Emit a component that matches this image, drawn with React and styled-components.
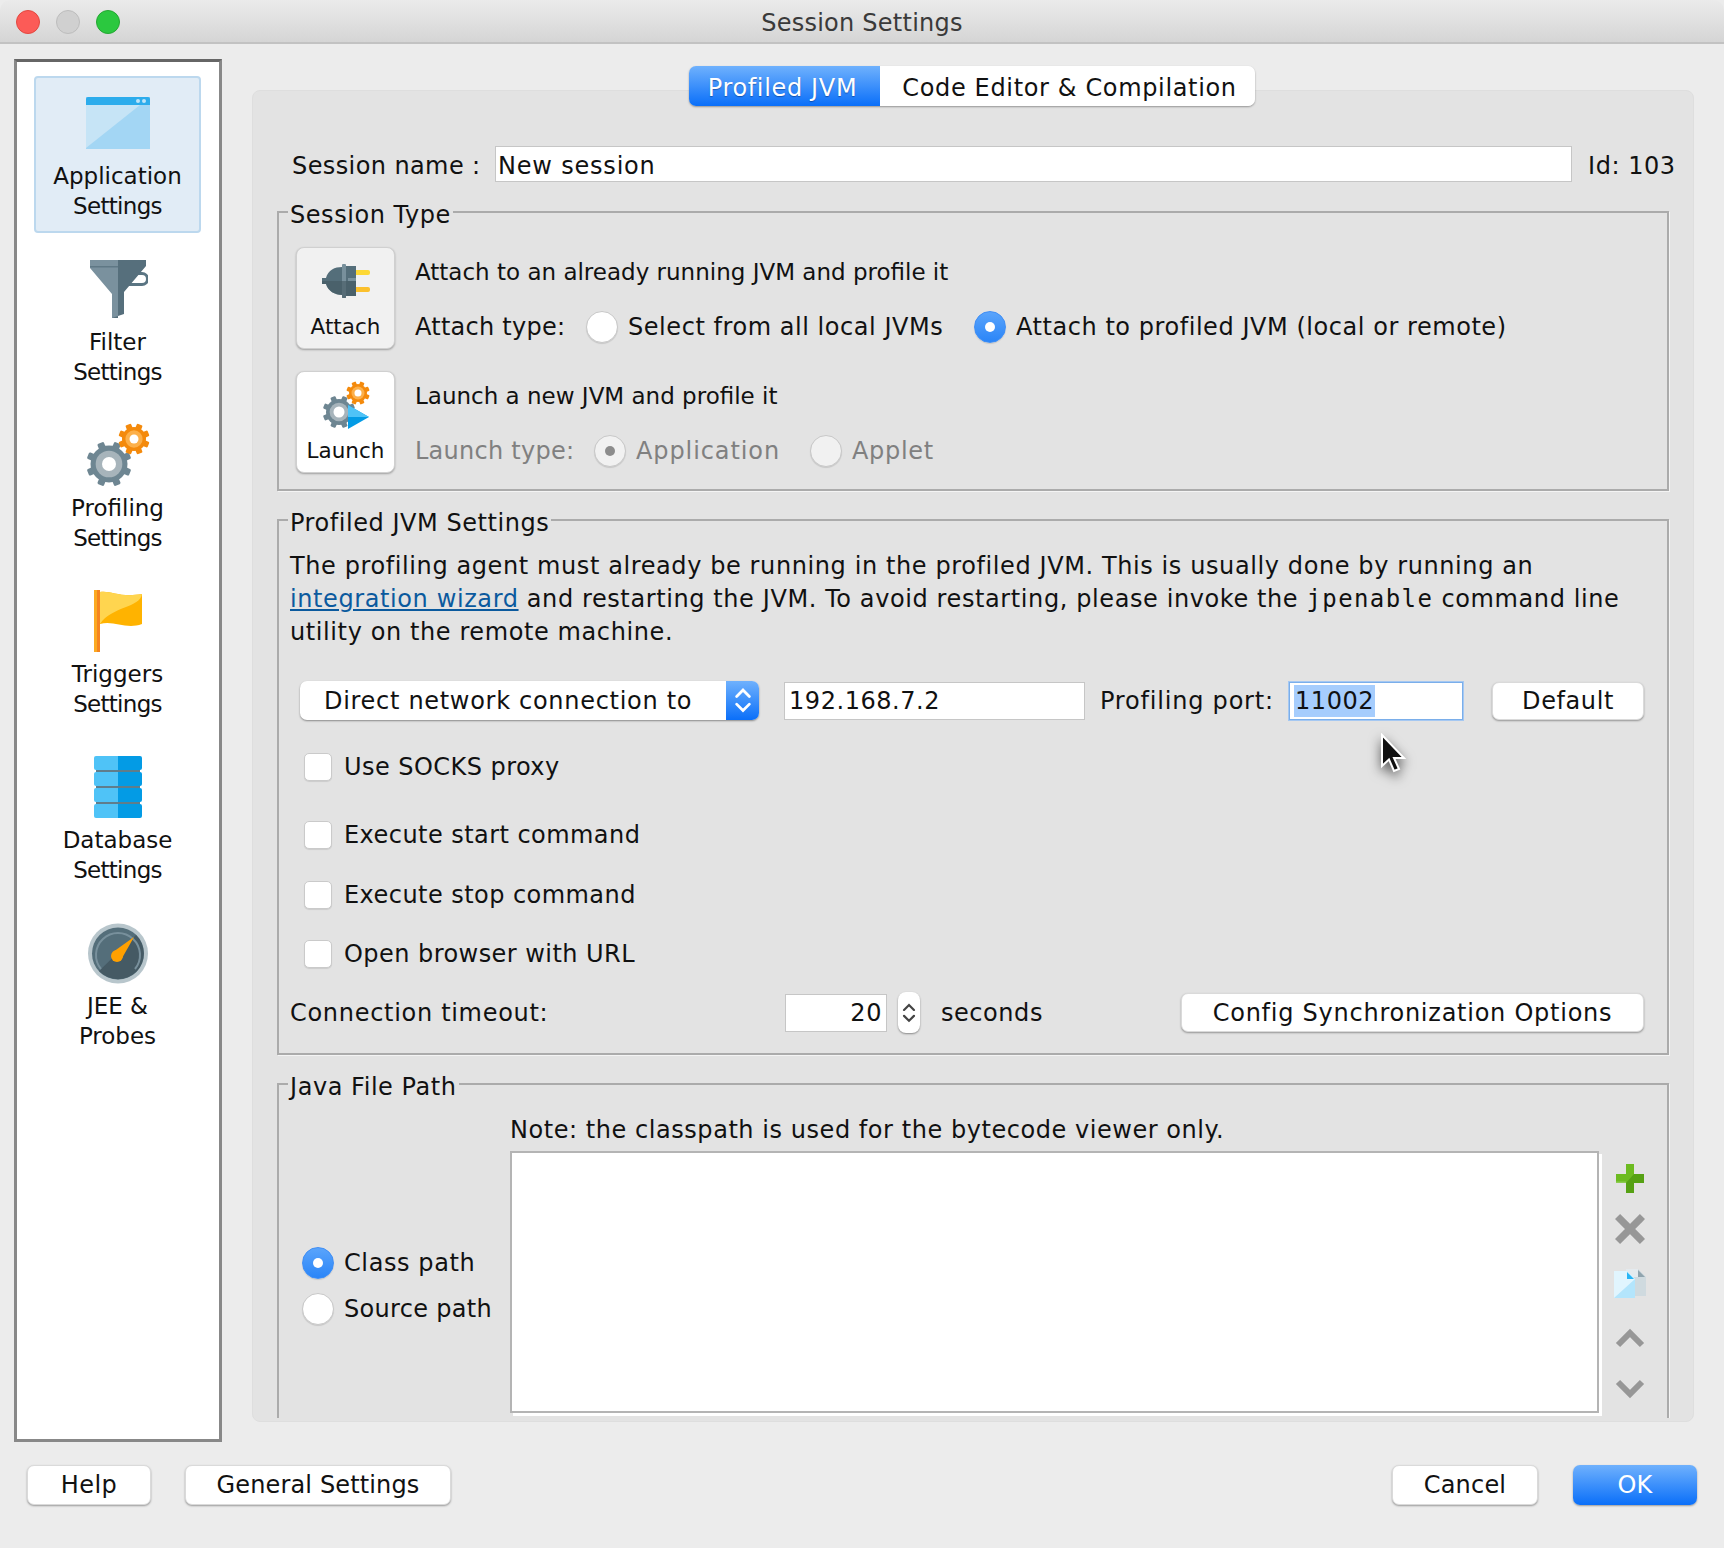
import React from 'react';
import styled, {createGlobalStyle} from 'styled-components';

const GlobalStyle = createGlobalStyle`
  html, body {
    margin: 0;
    padding: 0;
    background: #ececec;
  }
  body {
    font-family: "DejaVu Sans", sans-serif;
    font-size: 24px;
    letter-spacing: .55px;
    color: #111;
  }
`;

const Window = styled.div`
  width: 1724px;
  height: 1548px;
  display: flex;
  flex-direction: column;
  background: #ececec;
  overflow: hidden;
`;

const TitleBar = styled.div`
  height: 44px;
  flex: none;
  box-sizing: border-box;
  display: flex;
  align-items: center;
  justify-content: center;
  position: relative;
  padding-top: 4px;
  border-bottom: 2px solid #c2c2c2;
  border-radius: 10px 10px 0 0;
  background: linear-gradient(#ebebeb, #d5d5d5);
  color: #3a3a3a;
  letter-spacing: .25px;
`;

const Lights = styled.div`
  position: absolute;
  left: 16px;
  top: 10px;
  display: flex;
  gap: 16px;
`;

const Light = styled.span`
  width: 24px;
  height: 24px;
  box-sizing: border-box;
  border-radius: 50%;
  background: ${p => p.$color};
  border: 1px solid ${p => p.$edge};
`;

const Body = styled.div`
  flex: none;
  display: flex;
  gap: 30px;
  padding-left: 14px;
  height: 1378px;
`;

const Sidebar = styled.div`
  width: 208px;
  height: 1383px;
  margin-top: 15px;
  box-sizing: border-box;
  border: 3px solid #888;
  border-top-color: #666;
  background: #fff;
  padding: 14px 17px;
  display: flex;
  flex-direction: column;
  gap: 9px;
`;

const NavItem = styled.div`
  width: 167px;
  height: 157px;
  flex: none;
  box-sizing: border-box;
  border-radius: 4px;
  border: 2px solid ${p => (p.$active ? '#bcd8ee' : 'transparent')};
  background: ${p => (p.$active ? '#e1ecf6' : 'transparent')};
  display: flex;
  flex-direction: column;
  align-items: center;
  color: #111;
`;

const NavIcon = styled.div`
  height: 83px;
  flex: none;
  display: flex;
  align-items: center;
  justify-content: center;
  padding-top: 7px;
  box-sizing: border-box;
`;

const NavLabel = styled.div`
  text-align: center;
  line-height: 30px;
  font-size: 23px;
  letter-spacing: 0;
`;

const NavLine = styled.div`
  letter-spacing: ${p => (p.$tight ? '-.7px' : '0')};
`;

const Main = styled.div`
  width: 1442px;
  display: flex;
  flex-direction: column;
  align-items: center;
  padding-top: 22px;
`;

const Tabs = styled.div`
  display: flex;
  height: 40px;
  margin: 0 0 -16px -2px;
  position: relative;
  z-index: 1;
  border-radius: 7px;
  box-shadow: 0 1px 2px rgba(0, 0, 0, .35);
`;

const Tab = styled.div`
  width: ${p => p.$w}px;
  display: flex;
  align-items: center;
  justify-content: center;
  box-sizing: border-box;
  padding: ${p => (p.$active ? '3px 4px 0 0' : '3px 0 0 4px')};
  background: ${p => (p.$active ? 'linear-gradient(#6fb1fd, #0a6ff9)' : '#fff')};
  color: ${p => (p.$active ? '#fff' : '#111')};
  text-shadow: ${p => (p.$active ? '0 1px 1px rgba(0, 30, 90, .45)' : 'none')};
  letter-spacing: .65px;
  border-radius: ${p => (p.$active ? '7px 0 0 7px' : '0 7px 7px 0')};
`;

const Panel = styled.div`
  width: 1442px;
  height: 1332px;
  box-sizing: border-box;
  flex: none;
  background: #e3e3e3;
  border: 1px solid #dedede;
  border-radius: 8px;
  padding: 55px 10px 3px 24px;
  overflow: hidden;
`;

const PanelInner = styled.div`
  height: 100%;
  overflow: hidden;
  display: flex;
  flex-direction: column;
  gap: 17px;
`;

const SessionRow = styled.div`
  height: 36px;
  margin-bottom: -1px;
  display: flex;
  align-items: center;
  flex: none;
`;

const SessionLabel = styled.div`
  width: 218px;
  padding: 3px 0 0 15px;
  box-sizing: border-box;
  flex: none;
  letter-spacing: .4px;
`;

const Field = styled.div`
  width: ${p => p.$w}px;
  height: ${p => p.$h || 38}px;
  flex: none;
  box-sizing: border-box;
  margin-left: ${p => p.$left || 0}px;
  background: #fff;
  border: 1px solid ${p => (p.$focus ? '#7aaeea' : '#c6c6c6')};
  box-shadow: ${p => (p.$focus ? '0 0 0 1px #a5c8f2' : 'none')};
  display: flex;
  align-items: center;
  justify-content: ${p => (p.$right ? 'flex-end' : 'flex-start')};
  padding: ${p => p.$inset || '0 4px'};
  color: #111;
  white-space: nowrap;
  letter-spacing: ${p => p.$spacing || '.55px'};
`;

const IdText = styled.div`
  margin-left: 16px;
  padding-top: 3px;
  white-space: nowrap;
`;

const Group = styled.fieldset`
  margin: 0 0 ${p => p.$after || 0}px;
  flex: none;
  min-width: 0;
  box-sizing: border-box;
  width: 1392px;
  border: 2px solid #ababab;
  box-shadow: 1px 1px 0 #f4f4f4;
  padding: ${p => p.$pad};
  ${p => p.$open && `
    border-bottom: none;
    height: 400px;
  `}
`;

const Legend = styled.legend`
  margin-left: -2px;
  padding: 6px 2px 0;
  line-height: 22px;
  background: #e3e3e3;
`;

const ModeRow = styled.div`
  display: flex;
  gap: 20px;
  margin: 0 0 ${p => p.$gap || 0}px 6px;
`;

const ModeButton = styled.div`
  width: 99px;
  height: 102px;
  flex: none;
  box-sizing: border-box;
  border-radius: 8px;
  background: ${p => (p.$pressed ? '#f1f1f1' : '#fff')};
  border: 1px solid #d0d0d0;
  box-shadow: 0 1px 2px rgba(0, 0, 0, .3);
  display: flex;
  flex-direction: column;
  align-items: center;
  font-size: 21.500px;
  letter-spacing: 0;
`;

const ModeIcon = styled.div`
  height: 66px;
  flex: none;
  display: flex;
  align-items: center;
  justify-content: center;
`;

const ModeText = styled.div`
  height: 102px;
  display: flex;
  flex-direction: column;
`;

const ModeHeading = styled.div`
  height: 50px;
  flex: none;
  display: flex;
  align-items: center;
  font-size: 23px;
  letter-spacing: 0;
  white-space: nowrap;
`;

const ModeLine = styled.div`
  height: 50px;
  flex: none;
  display: flex;
  align-items: center;
  white-space: nowrap;
  color: ${p => (p.$muted ? '#808080' : '#111')};
  margin-top: 5px;
`;

const RowLabel = styled.div`
  width: ${p => p.$w}px;
  flex: none;
  letter-spacing: ${p => p.$spacing || '.55px'};
`;

const Option = styled.div`
  width: ${p => p.$w}px;
  flex: none;
  display: flex;
  align-items: center;
  gap: 10px;
  white-space: nowrap;
  letter-spacing: ${p => p.$spacing || '.55px'};
`;

const Radio = styled.span`
  width: 32px;
  height: 32px;
  flex: none;
  box-sizing: border-box;
  border-radius: 50%;
  display: flex;
  align-items: center;
  justify-content: center;
  border: 1px solid ${p => (p.$on ? '#3f8ef5' : '#c8c8c8')};
  background: ${p => (p.$on ? 'linear-gradient(#5aa4fb, #2a85f8)' : p.$muted ? '#f1f1f1' : '#fff')};
  box-shadow: 0 1px 1px rgba(0, 0, 0, .12);

  &::after {
    content: '';
    display: ${p => (p.$on || p.$dot ? 'block' : 'none')};
    width: 10px;
    height: 10px;
    border-radius: 50%;
    background: ${p => (p.$on ? '#fff' : '#8c8c8c')};
  }
`;

const Paragraph = styled.div`
  line-height: 33px;
  letter-spacing: .6px;
  white-space: nowrap;
`;

const Wizard = styled.span`
  color: #0b5a9e;
  text-decoration: underline;
`;

const Mono = styled.span`
  font-family: "DejaVu Sans Mono", monospace;
  letter-spacing: 1.400px;
`;

const NetRow = styled.div`
  height: 39px;
  margin: 32px 0 0 10px;
  display: flex;
  align-items: center;
`;

const Select = styled.div`
  width: 459px;
  height: 39px;
  flex: none;
  box-sizing: border-box;
  display: flex;
  align-items: center;
  justify-content: space-between;
  padding-left: 24px;
  background: #fff;
  border-radius: 7px;
  box-shadow: 0 1px 2px rgba(0, 0, 0, .4);
  overflow: hidden;
  white-space: nowrap;
  letter-spacing: .7px;
`;

const SelectArrows = styled.div`
  width: 33px;
  height: 39px;
  display: flex;
  align-items: center;
  justify-content: center;
  background: linear-gradient(#6fb1fd, #0a6ff9);
`;

const PortLabel = styled.div`
  width: 204px;
  padding-left: 15px;
  box-sizing: border-box;
  flex: none;
  white-space: nowrap;
  letter-spacing: .8px;
`;

const PortWrap = styled.div`
  position: relative;
  width: 174px;
  flex: none;
`;

const Selected = styled.span`
  background: #a6cdfd;
  line-height: 32px;
  padding: 0 1px;
`;

const Cursor = styled.svg`
  position: absolute;
  left: 90px;
  top: 51px;
  z-index: 2;
  filter: drop-shadow(0 5px 6px rgba(0, 0, 0, .6));
`;

const PushButton = styled.div`
  width: ${p => p.$w}px;
  height: ${p => p.$h || 39}px;
  flex: none;
  box-sizing: border-box;
  display: flex;
  align-items: center;
  justify-content: center;
  margin-left: ${p => p.$left || 0}px;
  border-radius: 7px;
  background: ${p => (p.$primary ? 'linear-gradient(#6fb1fd, #0a6ff9)' : '#fff')};
  color: ${p => (p.$primary ? '#fff' : '#111')};
  border: ${p => (p.$primary ? 'none' : '1px solid #dadada')};
  box-shadow: 0 1px 2px rgba(0, 0, 0, .35);
  white-space: nowrap;
  letter-spacing: ${p => p.$spacing || '.75px'};
`;

const CheckRow = styled.div`
  height: 30px;
  margin: ${p => p.$top}px 0 0 14px;
  display: flex;
  align-items: center;
  gap: 12px;
  letter-spacing: .45px;
`;

const Checkbox = styled.span`
  width: 28px;
  height: 28px;
  flex: none;
  box-sizing: border-box;
  background: #fff;
  border: 1px solid #cacaca;
  border-radius: 5px;
  box-shadow: 0 1px 1px rgba(0, 0, 0, .1);
`;

const TimeoutRow = styled.div`
  height: 39px;
  margin-top: 24px;
  display: flex;
  align-items: center;
`;

const Spinner = styled.div`
  width: 22px;
  height: 41px;
  margin-left: 11px;
  flex: none;
  display: flex;
  align-items: center;
  justify-content: center;
  background: #fff;
  border-radius: 8px;
  box-shadow: 0 1px 2px rgba(0, 0, 0, .4);
`;

const Seconds = styled.div`
  width: 261px;
  padding-left: 21px;
  box-sizing: border-box;
  flex: none;
`;

const JavaGrid = styled.div`
  display: grid;
  grid-template-columns: 220px 1089px 47px;
  grid-template-rows: 30px 262px;
  row-gap: 6px;
`;

const Note = styled.div`
  grid-column: 2 / 4;
  line-height: 30px;
  white-space: nowrap;
`;

const PathRadios = styled.div`
  display: flex;
  flex-direction: column;
  justify-content: center;
  padding: 8px 0 0 12px;
`;

const PathOption = styled.div`
  height: 46px;
  display: flex;
  align-items: center;
  gap: 10px;
  white-space: nowrap;
  letter-spacing: ${p => p.$spacing};
`;

const ListBox = styled.div`
  box-sizing: border-box;
  background: #fff;
  border: 2px solid #b4b4b4;
  box-shadow: 3px 3px 0 #fff;
`;

const ListTools = styled.div`
  display: flex;
  flex-direction: column;
  align-items: flex-end;
  padding-top: 2px;
`;

const ToolIcon = styled.div`
  height: ${p => p.$h}px;
  width: 32px;
  flex: none;
  display: flex;
  align-items: center;
  justify-content: center;
`;

const Footer = styled.div`
  flex: none;
  display: flex;
  align-items: flex-start;
  padding: 43px 27px 0;
`;

const Spacer = styled.div`
  flex: 1;
`;

const Gear = ({cx, cy, r, hole, teeth = 8, tooth, body, ring}) => {
    const list = [];
    for (let i = 0; i < teeth; i++) {
        list.push(
            <rect
                key={i}
                x={cx - tooth / 2}
                y={cy - r - tooth * 0.6}
                width={tooth}
                height={tooth}
                rx={tooth * 0.2}
                fill={body}
                transform={`rotate(${(i * 360) / teeth + 360 / teeth / 2} ${cx} ${cy})`}
            />
        );
    }
    return (
        <g>
            {list}
            <circle cx={cx} cy={cy} r={r} fill={body}/>
            <circle cx={cx} cy={cy} r={r * 0.72} fill={ring}/>
            <circle cx={cx} cy={cy} r={hole} fill='#fff'/>
        </g>
    );
};

const WindowIcon = () => (
    <svg width='64' height='52' viewBox='0 0 64 52'>
        <rect width='64' height='52' fill='#a3d6f4'/>
        <path d='M0 8H54L0 51Z' fill='#c6e4f6'/>
        <path d='M0 2a2 2 0 012-2H62a2 2 0 012 2V8H0Z' fill='#2cacec'/>
        <circle cx='52' cy='4' r='2' fill='#bfe4f8'/>
        <circle cx='58' cy='4' r='2' fill='#bfe4f8'/>
    </svg>
);

const FunnelIcon = () => (
    <svg width='60' height='58' viewBox='-2 0 60 58'>
        <path d='M44 12h8a7 7 0 010 14H38v-3h14a4 4 0 000-8H44Z' fill='#5a7583'/>
        <path d='M0 0H28V58L22 58V34L0 8Z' fill='#7a919e'/>
        <path d='M28 0H56V6L34 32V54L22 58H28Z' fill='#566f7c'/>
        <rect y='6' width='28' height='1.5' fill='#5f7885'/>
    </svg>
);

const GearsIcon = () => (
    <svg width='64' height='64' viewBox='0 0 64 64'>
        <Gear cx={23} cy={41} r={18.5} hole={7} tooth={7} body='#6e8692' ring='#a7b4bb'/>
        <Gear cx={48} cy={16} r={12} hole={4.5} tooth={6} body='#f48a0c' ring='#fcb04a'/>
    </svg>
);

const FlagIcon = () => (
    <svg width='48' height='62' viewBox='0 0 48 62'>
        <path d='M6 2C16 0 26 8 48 4V34C32 40 20 30 6 34Z' fill='#ffb300'/>
        <path d='M6 2C16 0 26 8 48 4C46 18 18 16 6 34Z' fill='#ffd54f'/>
        <rect width='3' height='62' fill='#fbaa22'/>
        <rect x='3' width='3' height='62' fill='#f5841f'/>
    </svg>
);

const DatabaseIcon = () => (
    <svg width='48' height='62' viewBox='0 0 48 62'>
        {[0, 16, 32, 48].map(y => (
            <g key={y}>
                <path d={`M2 ${y}H24V${y + 14}H2a2 2 0 01-2-2V${y + 2}a2 2 0 012-2Z`} fill='#4fc3f7'/>
                <path d={`M24 ${y}H46a2 2 0 012 2V${y + 12}a2 2 0 01-2 2H24Z`} fill='#039be5'/>
            </g>
        ))}
        {[14, 30, 46].map(y => <rect key={y} x='2' y={y} width='44' height='2' fill='#607d8b'/>)}
    </svg>
);

const GaugeIcon = () => (
    <svg width='60' height='61' viewBox='0 0 60 61'>
        <circle cx='30' cy='30.500' r='30' fill='#b8c6cc'/>
        <circle cx='30' cy='30.500' r='26' fill='#546e7a'/>
        <path d='M11 48L48 12A26 26 0 0 1 49 48A26 26 0 0 1 11 48Z' fill='#455a64'/>
        <path d='M13 46A22 22 0 1 1 47 46' fill='none' stroke='#78909c' strokeWidth='2'/>
        <path d='M46 14L33 37L25 29Z' fill='#ffa000'/>
        <circle cx='29' cy='33' r='6' fill='#ffa000'/>
    </svg>
);

const PlugIcon = () => (
    <svg width='48' height='34' viewBox='0 0 48 34'>
        <rect x='30' y='6' width='18' height='5' rx='2' fill='#fdd835'/>
        <rect x='30' y='23' width='18' height='5' rx='2' fill='#fbc02d'/>
        <path d='M4 14C6 6 13 3 20 3V31C13 31 6 27 4 20H0V14Z' fill='#546e7a'/>
        <rect x='20' y='0' width='4' height='34' rx='1' fill='#78909c'/>
        <path d='M24 2H34V32H24Z' fill='#546e7a'/>
        <path d='M0 17H34V32H24V34H20V31C13 31 6 27 4 20H0Z' fill='#455a64' opacity='.65'/>
        <rect x='26' y='14' width='8' height='3' fill='#78909c'/>
    </svg>
);

const LaunchIcon = () => (
    <svg width='48' height='48' viewBox='0 0 48 48'>
        <Gear cx={17} cy={31} r={13} hole={5.5} tooth={5.5} body='#6e8692' ring='#a7b4bb'/>
        <Gear cx={36} cy={12} r={9} hole={3.5} tooth={4.5} body='#f48a0c' ring='#fcb04a'/>
        <path d='M26 24L47 36L26 48Z' fill='#039be5'/>
        <path d='M26 24L47 36L26 36Z' fill='#4fc3f7'/>
    </svg>
);

const PlusIcon = () => (
    <svg width='28' height='29' viewBox='0 0 28 29'>
        <path d='M10 0H18V10H28V19H18V29H10V19H0V10H10Z' fill='#6cbb20'/>
        <path d='M18 10H28V19H18V29H10V19Z' fill='#56a114'/>
        <rect y='17.500' width='10' height='1.500' fill='#8ccc50'/>
    </svg>
);

const CrossIcon = () => (
    <svg width='30' height='30' viewBox='0 0 30 30'>
        <path d='M4 4L26 26M26 4L4 26' stroke='#979797' strokeWidth='8' strokeLinecap='square' transform='translate(15 15) scale(.9) translate(-15 -15)'/>
    </svg>
);

const PagesIcon = () => (
    <svg width='32' height='30' viewBox='0 0 32 30'>
        <path d='M12 0H24L32 8V27H12Z' fill='#cfdadf'/>
        <path d='M12 0H24V8H12Z' fill='#e4eaee'/>
        <path d='M24 1L31 8H24Z' fill='#90a4ae'/>
        <path d='M0 2H13L21 10V29H0Z' fill='#b3e5fc'/>
        <path d='M0 2H13L21 10L0 29Z' fill='#e1f5fe'/>
        <path d='M13 3L20 10H13Z' fill='#29b6f6'/>
    </svg>
);

const ChevronIcon = ({down}) => (
    <svg width='30' height='20' viewBox='0 0 30 20'>
        <path d={down ? 'M3 3L15 15L27 3' : 'M3 17L15 5L27 17'} fill='none' stroke='#979797' strokeWidth='6'/>
    </svg>
);

const UpDownIcon = ({color, size}) => (
    <svg width={size} height={size * 1.7} viewBox='0 0 14 24'>
        <path d='M2 9L7 4L12 9M2 15L7 20L12 15' fill='none' stroke={color} strokeWidth='2.200' strokeLinecap='round'/>
    </svg>
);

const navItems = [
    {label: ['Application', 'Settings'], icon: <WindowIcon/>, active: true},
    {label: ['Filter', 'Settings'], icon: <FunnelIcon/>},
    {label: ['Profiling', 'Settings'], icon: <GearsIcon/>},
    {label: ['Triggers', 'Settings'], icon: <FlagIcon/>},
    {label: ['Database', 'Settings'], icon: <DatabaseIcon/>},
    {label: ['JEE &', 'Probes'], icon: <GaugeIcon/>}
];

const App = () => {
    return (
        <Window>
            <GlobalStyle/>
            <TitleBar>
                <Lights>
                    <Light $color='#fc5b57' $edge='#e3473f'/>
                    <Light $color='#d0d0d0' $edge='#bdbdbd'/>
                    <Light $color='#2bc83f' $edge='#24a732'/>
                </Lights>
                Session Settings
            </TitleBar>
            <Body>
                <Sidebar>
                    {navItems.map(item => (
                        <NavItem key={item.label[0]} $active={item.active}>
                            <NavIcon>{item.icon}</NavIcon>
                            <NavLabel>
                                <NavLine>{item.label[0]}</NavLine>
                                <NavLine $tight={item.label[1] === 'Settings'}>{item.label[1]}</NavLine>
                            </NavLabel>
                        </NavItem>
                    ))}
                </Sidebar>
                <Main>
                    <Tabs>
                        <Tab $active $w={191}>Profiled JVM</Tab>
                        <Tab $w={375}>Code Editor &amp; Compilation</Tab>
                    </Tabs>
                    <Panel>
                        <PanelInner>
                            <SessionRow>
                                <SessionLabel>Session name :</SessionLabel>
                                <Field $w={1077} $h={36} $inset='3px 2px 0' $spacing='.8px'>New session</Field>
                                <IdText>Id: 103</IdText>
                            </SessionRow>

                            <Group $pad='21px 15px 16px 11px' $after={-2}>
                                <Legend>Session Type</Legend>
                                <ModeRow $gap={22}>
                                    <ModeButton $pressed>
                                        <ModeIcon><PlugIcon/></ModeIcon>
                                        Attach
                                    </ModeButton>
                                    <ModeText>
                                        <ModeHeading>Attach to an already running JVM and profile it</ModeHeading>
                                        <ModeLine>
                                            <RowLabel $w={171} $spacing='.25px'>Attach type:</RowLabel>
                                            <Option $w={388}><Radio/>Select from all local JVMs</Option>
                                            <Option><Radio $on/>Attach to profiled JVM (local or remote)</Option>
                                        </ModeLine>
                                    </ModeText>
                                </ModeRow>
                                <ModeRow>
                                    <ModeButton>
                                        <ModeIcon><LaunchIcon/></ModeIcon>
                                        Launch
                                    </ModeButton>
                                    <ModeText>
                                        <ModeHeading>Launch a new JVM and profile it</ModeHeading>
                                        <ModeLine $muted>
                                            <RowLabel $w={179} $spacing='.25px'>Launch type:</RowLabel>
                                            <Option $w={216} $spacing='.9px'><Radio $muted $dot/>Application</Option>
                                            <Option $spacing='.7px'><Radio $muted/>Applet</Option>
                                        </ModeLine>
                                    </ModeText>
                                </ModeRow>
                            </Group>

                            <Group $pad='16px 15px 21px 11px' $after={-2}>
                                <Legend>Profiled JVM Settings</Legend>
                                <Paragraph>
                                    The profiling agent must already be running in the profiled JVM. This is usually done by running an<br/>
                                    <Wizard>integration wizard</Wizard> and restarting the JVM. To avoid restarting, please invoke the <Mono>jpenable</Mono> command line<br/>
                                    utility on the remote machine.
                                </Paragraph>
                                <NetRow>
                                    <Select>
                                        Direct network connection to
                                        <SelectArrows><UpDownIcon color='#fff' size={18}/></SelectArrows>
                                    </Select>
                                    <Field $w={301} $left={25}>192.168.7.2</Field>
                                    <PortLabel>Profiling port:</PortLabel>
                                    <PortWrap>
                                        <Field $w={174} $focus><Selected>11002</Selected></Field>
                                        <Cursor width='28' height='42' viewBox='0 0 14 21'>
                                            <path d='M1.500 1V16.500L5 13.200L7.500 19L10 18L7.500 12.500H12.500Z' fill='#111' stroke='#fff' strokeWidth='1'/>
                                        </Cursor>
                                    </PortWrap>
                                    <PushButton $w={152} $h={38} $left={29} $spacing='.6px'>Default</PushButton>
                                </NetRow>
                                <CheckRow $top={32}><Checkbox/>Use SOCKS proxy</CheckRow>
                                <CheckRow $top={38}><Checkbox/>Execute start command</CheckRow>
                                <CheckRow $top={30}><Checkbox/>Execute stop command</CheckRow>
                                <CheckRow $top={29}><Checkbox/>Open browser with URL</CheckRow>
                                <TimeoutRow>
                                    <RowLabel $w={495} $spacing='.7px'>Connection timeout:</RowLabel>
                                    <Field $w={102} $right>20</Field>
                                    <Spinner><UpDownIcon color='#444' size={14}/></Spinner>
                                    <Seconds>seconds</Seconds>
                                    <PushButton $w={463}>Config Synchronization Options</PushButton>
                                </TimeoutRow>
                            </Group>

                            <Group $open $pad='17px 0 0 11px'>
                                <Legend>Java File Path</Legend>
                                <JavaGrid>
                                    <Note>Note: the classpath is used for the bytecode viewer only.</Note>
                                    <PathRadios>
                                        <PathOption $spacing='.6px'><Radio $on/>Class path</PathOption>
                                        <PathOption $spacing='.3px'><Radio/>Source path</PathOption>
                                    </PathRadios>
                                    <ListBox/>
                                    <ListTools>
                                        <ToolIcon $h={50}><PlusIcon/></ToolIcon>
                                        <ToolIcon $h={52}><CrossIcon/></ToolIcon>
                                        <ToolIcon $h={58}><PagesIcon/></ToolIcon>
                                        <ToolIcon $h={50}><ChevronIcon/></ToolIcon>
                                        <ToolIcon $h={52}><ChevronIcon down/></ToolIcon>
                                    </ListTools>
                                </JavaGrid>
                            </Group>
                        </PanelInner>
                    </Panel>
                </Main>
            </Body>
            <Footer>
                <PushButton $w={124} $h={40} $spacing='.5px'>Help</PushButton>
                <PushButton $w={266} $h={40} $left={34} $spacing='.15px'>General Settings</PushButton>
                <Spacer/>
                <PushButton $w={146} $h={40} $spacing='.2px'>Cancel</PushButton>
                <PushButton $w={124} $h={40} $left={35} $primary $spacing='.2px'>OK</PushButton>
            </Footer>
        </Window>
    );
};

export default App;
